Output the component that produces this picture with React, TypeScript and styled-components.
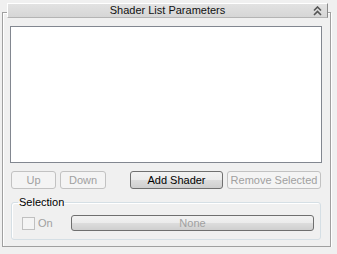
import React from "react";
import styled, { createGlobalStyle } from "styled-components";

const GlobalStyle = createGlobalStyle`
  body {
    margin: 0;
    background: #f0f0f0;
    font-family: "Liberation Sans", Arial, sans-serif;
    font-size: 11px;
  }
`;

const SRollout = styled.div`
  width: 329px;
  padding: 3px 0 0 2px;
  display: flex;
  flex-direction: column;
`;

const STitleBar = styled.div`
  position: relative;
  z-index: 1;
  box-sizing: border-box;
  width: 321px;
  height: 15px;
  margin-left: 5px;
  border-top: 1px solid #fff;
  border-left: 1px solid #fff;
  border-right: 1px solid #8a8a8a;
  border-bottom: 1px solid #b4b4b4;
  background: linear-gradient(#e2e2e2, #d6d6d6);
  display: flex;
  align-items: center;
  justify-content: center;
`;

const STitle = styled.span`
  color: #111;
  font-size: 11px;
  line-height: 13px;
`;

const SCollapse = styled.svg`
  position: absolute;
  right: 5px;
  top: 2px;
`;

const SFrame = styled.div`
  box-sizing: border-box;
  margin-top: -6px;
  border: 1px solid #a0a0a0;
  box-shadow: inset 1px 1px 0 #fff, 1px 1px 0 #fff;
  padding: 13px 8px 6px 7px;
  display: flex;
  flex-direction: column;
`;

const SList = styled.div`
  box-sizing: border-box;
  height: 137px;
  background: #fff;
  border: 1px solid #828790;
`;

const SButtonRow = styled.div`
  display: flex;
  margin-top: 8px;
  padding: 0 1px;
  gap: 4px;
`;

const SButton = styled.button<{ $w: number; $push?: boolean }>`
  box-sizing: border-box;
  width: ${(p) => p.$w}px;
  height: 18px;
  margin: 0;
  margin-left: ${(p) => (p.$push ? "auto" : "0")};
  padding: 0;
  font-family: "Liberation Sans", Arial, sans-serif;
  font-size: 11px;
  border-radius: 3px;
  border: 1px solid #707070;
  color: #000;
  background: linear-gradient(#f2f2f2 0%, #ebebeb 50%, #dddddd 50%, #cfcfcf 100%);

  &:disabled {
    border-color: #c2c2c2;
    background: #f4f4f4;
    color: #a0a0a0;
  }
`;

const SGroup = styled.fieldset`
  margin: 7px 1px 0 1px;
  padding: 6px 6px 8px 10px;
  min-width: 0;
  border: 1px solid #d5dfe5;
  border-radius: 3px;
  box-shadow: inset 1px 1px 0 #fff;
  display: flex;
  align-items: center;
`;

const SLegend = styled.legend`
  margin-left: -4px;
  padding: 0 1px;
  font-size: 11px;
  line-height: 13px;
  color: #000;
`;

const SCheck = styled.span`
  box-sizing: border-box;
  width: 13px;
  height: 13px;
  border: 1px solid #c0c0c0;
  background: #f4f4f4;
`;

const SCheckLabel = styled.span`
  margin-left: 3px;
  color: #a0a0a0;
  width: 33px;
`;

const SWideButton = styled(SButton)`
  flex: 1;
  height: 16px;
  color: #a0a0a0;
  &:disabled {
    border-color: #6f6f6f;
    background: linear-gradient(#f2f2f2 0%, #ebebeb 50%, #dddddd 50%, #cfcfcf 100%);
    color: #a0a0a0;
  }
`;

export default function App() {
  return (
    <>
      <GlobalStyle />
      <SRollout>
        <STitleBar>
          <STitle>Shader List Parameters</STitle>
          <SCollapse width="9" height="10" viewBox="0 0 9 10">
            <path d="M1 4.5 L4.5 1 L8 4.5" fill="none" stroke="#555" strokeWidth="1.6" />
            <path d="M1 9 L4.5 5.5 L8 9" fill="none" stroke="#555" strokeWidth="1.6" />
          </SCollapse>
        </STitleBar>
        <SFrame>
          <SList />
          <SButtonRow>
            <SButton $w={45} disabled>Up</SButton>
            <SButton $w={46} disabled>Down</SButton>
            <SButton $w={93} $push>Add Shader</SButton>
            <SButton $w={94} disabled>Remove Selected</SButton>
          </SButtonRow>
          <SGroup>
            <SLegend>Selection</SLegend>
            <SCheck />
            <SCheckLabel>On</SCheckLabel>
            <SWideButton $w={244} disabled>None</SWideButton>
          </SGroup>
        </SFrame>
      </SRollout>
    </>
  );
}
